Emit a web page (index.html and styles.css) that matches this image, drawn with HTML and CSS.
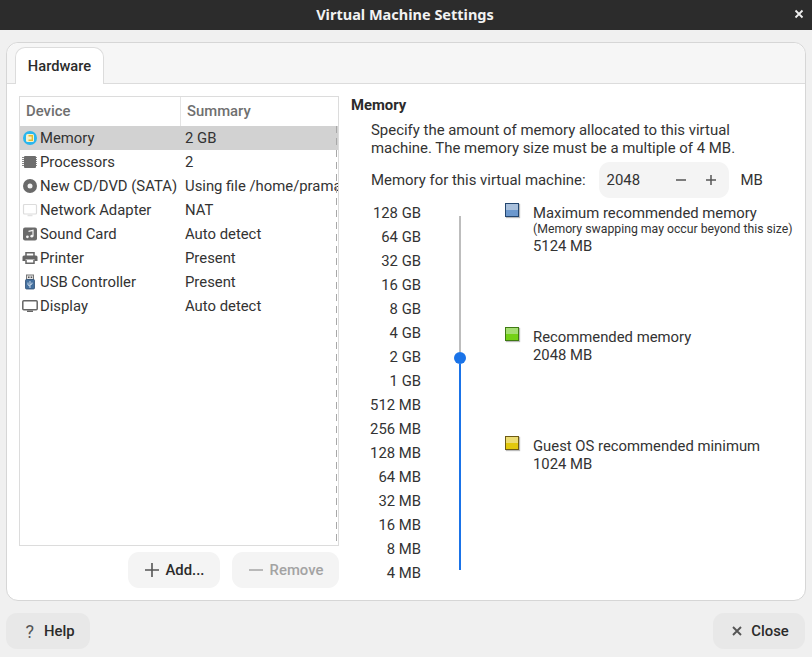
FILE: index.html
```html
<!DOCTYPE html>
<html>
<head>
    <meta charset="UTF-8">
    <title>Virtual Machine Settings</title>
    <link rel="stylesheet" href="styles.css">
</head>
<body>
    <header class="titlebar">
        <span class="title">Virtual Machine Settings</span>
        <svg class="title-close" width="10" height="10" viewBox="0 0 10 10"><path d="M1.500 1.500l7 7M8.500 1.500l-7 7" stroke="#eee" stroke-width="1.800"/></svg>
    </header>

    <div class="frame">
        <div class="tabs">
            <div class="tab">Hardware</div>
        </div>
        <div class="page">
            <section class="devices">
                <div class="tree">
                    <div class="tree-head">
                        <div class="col-device">Device</div>
                        <div class="col-summary">Summary</div>
                    </div>
                    <div class="tree-row selected">
                        <svg class="dev-icon" viewBox="0 0 16 16"><circle cx="8" cy="8" r="7" fill="#29b6ee"/><rect x="4" y="4" width="8" height="8" rx="1.500" fill="#f6f1cc"/><path d="M6.500 5.700h3.800v4.600H6.500" fill="none" stroke="#e2bd2c" stroke-width="1.400"/></svg>
                        <span class="dev-name">Memory</span><span class="dev-sum">2 GB</span>
                    </div>
                    <div class="tree-row">
                        <svg class="dev-icon" viewBox="0 0 16 16"><rect x="2" y="2" width="12" height="12" rx="1" fill="#6e6e6e"/><path d="M0 3.500h2M0 5.500h2M0 7.500h2M0 9.500h2M0 11.500h2M14 3.500h1M14 5.500h1M14 7.500h1M14 9.500h1M14 11.500h1" stroke="#8a8a8a" stroke-width="1"/></svg>
                        <span class="dev-name">Processors</span><span class="dev-sum">2</span>
                    </div>
                    <div class="tree-row">
                        <svg class="dev-icon" viewBox="0 0 16 16"><circle cx="8" cy="8" r="7" fill="#6a6a6a"/><circle cx="8" cy="8" r="2.500" fill="#f2f2f2"/></svg>
                        <span class="dev-name">New CD/DVD (SATA)</span><span class="dev-sum">Using file /home/pramaa</span>
                    </div>
                    <div class="tree-row">
                        <svg class="dev-icon" viewBox="0 0 16 16"><rect x="1.500" y="2.500" width="13" height="9.500" rx="1" fill="#fff" stroke="#dcdcdc" stroke-width="1.200"/><path d="M5.500 13.500h5" stroke="#e2e2e2" stroke-width="1.500"/></svg>
                        <span class="dev-name">Network Adapter</span><span class="dev-sum">NAT</span>
                    </div>
                    <div class="tree-row">
                        <svg class="dev-icon" viewBox="0 0 16 16"><rect x="1" y="1.500" width="14" height="13" rx="2" fill="#6b6b6b"/><path d="M6.500 5.300l4.500-1v5.900" fill="none" stroke="#f2f2f2" stroke-width="1.200"/><circle cx="5.400" cy="10.800" r="1.400" fill="#f2f2f2"/><circle cx="9.800" cy="10.200" r="1.400" fill="#f2f2f2"/></svg>
                        <span class="dev-name">Sound Card</span><span class="dev-sum">Auto detect</span>
                    </div>
                    <div class="tree-row">
                        <svg class="dev-icon" viewBox="0 0 16 16"><path d="M4 6V2.700h8V6" fill="none" stroke="#666" stroke-width="1.500"/><path d="M2 5.500h12a1.500 1.500 0 0 1 1.500 1.500v4h-3V9.500h-9V11H.5V7A1.500 1.500 0 0 1 2 5.500z" fill="#666"/><path d="M4 10v3.300h8V10" fill="none" stroke="#666" stroke-width="1.500"/></svg>
                        <span class="dev-name">Printer</span><span class="dev-sum">Present</span>
                    </div>
                    <div class="tree-row">
                        <svg class="dev-icon" viewBox="0 0 16 16"><rect x="4.500" y="1" width="7" height="5" fill="#e4e4e4" stroke="#777"/><rect x="6" y="2.500" width="1.500" height="1.500" fill="#555"/><rect x="8.700" y="2.500" width="1.500" height="1.500" fill="#555"/><rect x="3.500" y="5.500" width="9" height="9.500" rx="1" fill="#44709f" stroke="#2f4f75" stroke-width="0.800"/><path d="M8 7v7M6 8.500v2.500l2 1M10 8.500v1.500l-2 1" fill="none" stroke="#d7e3f0" stroke-width="0.900"/></svg>
                        <span class="dev-name">USB Controller</span><span class="dev-sum">Present</span>
                    </div>
                    <div class="tree-row">
                        <svg class="dev-icon" viewBox="0 0 16 16"><rect x="0.800" y="2.800" width="14.400" height="9" rx="1" fill="#fff" stroke="#666" stroke-width="1.500"/><rect x="5" y="12.500" width="6" height="1.500" fill="#666"/></svg>
                        <span class="dev-name">Display</span><span class="dev-sum">Auto detect</span>
                    </div>
                    <div class="scroll-mark"></div>
                </div>
                <div class="device-actions">
                    <button class="btn btn-add" type="button">
                        <svg width="14" height="14" viewBox="0 0 14 14"><path d="M7 0v14M0 7h14" stroke="#555" stroke-width="1.600"/></svg>
                        Add...
                    </button>
                    <button class="btn btn-remove" type="button">
                        <svg width="14" height="14" viewBox="0 0 14 14"><path d="M0 7h14" stroke="#aaa" stroke-width="1.600"/></svg>
                        Remove
                    </button>
                </div>
            </section>

            <section class="memory">
                <h2>Memory</h2>
                <p class="intro">Specify the amount of memory allocated to this virtual machine. The memory size must be a multiple of 4 MB.</p>
                <div class="mem-input">
                    <span>Memory for this virtual machine:</span>
                    <div class="spin">
                        <span class="spin-value">2048</span>
                        <svg width="12" height="12" viewBox="0 0 12 12"><path d="M1 6h10" stroke="#555" stroke-width="1.500"/></svg>
                        <svg width="12" height="12" viewBox="0 0 12 12"><path d="M1 6h10M6 1v10" stroke="#555" stroke-width="1.500"/></svg>
                    </div>
                    <span>MB</span>
                </div>
                <div class="scale-area">
                    <div class="scale-labels">
                        <div>128 GB</div><div>64 GB</div><div>32 GB</div><div>16 GB</div>
                        <div>8 GB</div><div>4 GB</div><div>2 GB</div><div>1 GB</div>
                        <div>512 MB</div><div>256 MB</div><div>128 MB</div><div>64 MB</div>
                        <div>32 MB</div><div>16 MB</div><div>8 MB</div><div>4 MB</div>
                    </div>
                    <div class="slider">
                        <div class="track-off"></div>
                        <div class="thumb"></div>
                        <div class="track-on"></div>
                    </div>
                    <div class="legend">
                        <div class="legend-item item-max">
                            <span class="swatch swatch-blue"></span>
                            <div>
                                <div>Maximum recommended memory</div>
                                <div class="small">(Memory swapping may occur beyond this size)</div>
                                <div>5124 MB</div>
                            </div>
                        </div>
                        <div class="legend-item item-rec">
                            <span class="swatch swatch-green"></span>
                            <div>
                                <div>Recommended memory</div>
                                <div>2048 MB</div>
                            </div>
                        </div>
                        <div class="legend-item item-min">
                            <span class="swatch swatch-yellow"></span>
                            <div>
                                <div>Guest OS recommended minimum</div>
                                <div>1024 MB</div>
                            </div>
                        </div>
                    </div>
                </div>
            </section>
        </div>
    </div>

    <footer class="dialog-actions">
        <button class="btn btn-dark btn-help" type="button">
            <span class="help-mark">?</span>
            Help
        </button>
        <button class="btn btn-dark btn-close" type="button">
            <svg width="10" height="10" viewBox="0 0 10 10"><path d="M1 1l8 8M9 1l-8 8" stroke="#555" stroke-width="1.900"/></svg>
            Close
        </button>
    </footer>
</body>
</html>
```

FILE: styles.css
```css
html, body {
    height: 100%;
}
body {
    margin: 0;
    height: 657px;
    overflow: hidden;
    display: flex;
    flex-direction: column;
    background: #f0f0f0;
    font-family: Roboto, sans-serif;
    font-size: 14.85px;
    color: #333;
}
.titlebar {
    height: 30px;
    flex: none;
    position: relative;
    background: #2c2c2c;
    color: #f2f2f2;
    display: flex;
    align-items: center;
    justify-content: center;
}
.title {
    font-family: "Noto Sans", sans-serif;
    font-weight: 700;
    font-size: 14.5px;
    margin-right: 2px;
    padding-bottom: 2px;
}
.title-close {
    position: absolute;
    right: 8px;
    top: 9px;
}
.frame {
    flex: none;
    height: 557px;
    margin: 12px 6px 0;
    background: #fff;
    border: 1px solid #d6d6d6;
    border-radius: 12px;
    display: flex;
    flex-direction: column;
}
.tabs {
    height: 41px;
    flex: none;
    box-sizing: border-box;
    background: #f6f6f6;
    border-bottom: 1px solid #dcdcdc;
    border-radius: 12px 12px 0 0;
    padding: 4px 0 0 8px;
    display: flex;
}
.tab {
    width: 89px;
    height: 37px;
    box-sizing: border-box;
    background: #fff;
    border: 1px solid #dcdcdc;
    border-bottom: none;
    border-radius: 10px 10px 0 0;
    display: flex;
    align-items: center;
    justify-content: center;
    font-weight: 500;
    font-size: 14.67px;
    color: #2b2b2b;
}
.page {
    flex: 1;
    display: flex;
    padding: 12px 0 0 12px;
    min-height: 0;
}
.devices {
    width: 320px;
    flex: none;
    display: flex;
    flex-direction: column;
}
.tree {
    position: relative;
    width: 320px;
    height: 450px;
    box-sizing: border-box;
    border: 1px solid #dcdcdc;
    overflow: hidden;
}
.tree-head {
    height: 29px;
    display: flex;
    color: #6f6f6f;
    font-weight: 500;
    line-height: 28px;
}
.col-device {
    width: 161px;
    padding-left: 6px;
    box-sizing: border-box;
    border-right: 1px solid #e4e4e4;
}
.col-summary {
    padding-left: 6px;
}
.tree-row {
    height: 24px;
    display: flex;
    align-items: center;
    white-space: nowrap;
    padding-left: 2px;
}
.tree-row.selected {
    background: #d2d2d2;
}
.dev-icon {
    width: 16px;
    height: 16px;
    flex: none;
    margin-right: 2px;
}
.dev-name {
    width: 145px;
    flex: none;
}
.scroll-mark {
    position: absolute;
    top: 29px;
    bottom: 0;
    right: 1px;
    width: 1px;
    background: repeating-linear-gradient(to bottom, #a8a8a8 0 7px, transparent 7px 12px);
}
.device-actions {
    margin-top: 6px;
    display: flex;
    justify-content: flex-end;
    gap: 12px;
}
.btn {
    height: 36px;
    border: none;
    border-radius: 11px;
    background: #f4f4f4;
    font: 500 14.85px Roboto, sans-serif;
    color: #2b2b2b;
    display: flex;
    align-items: center;
    justify-content: center;
    gap: 7px;
    padding: 0;
}
.btn-add {
    width: 92px;
    padding-left: 1px;
}
.btn-remove {
    width: 107px;
    padding-left: 1px;
    color: #a3a3a3;
}
.memory {
    margin-left: 12px;
    flex: 1;
    min-width: 0;
}
.memory h2 {
    margin: 0;
    font-size: 14.85px;
    font-weight: 700;
    line-height: 18px;
    color: #2b2b2b;
}
.intro {
    margin: 7px 0 0 20px;
    width: 385px;
    font-size: 14.93px;
    line-height: 18px;
}
.mem-input {
    margin: 5px 0 0 20px;
    height: 36px;
    font-size: 14.93px;
    display: flex;
    align-items: center;
}
.spin {
    width: 130px;
    height: 36px;
    margin: 0 12px 0 13px;
    box-sizing: border-box;
    padding: 0 12px 0 8px;
    background: #f4f4f4;
    border-radius: 11px;
    display: flex;
    align-items: center;
    gap: 18px;
}
.spin-value {
    flex: 1;
}
.scale-area {
    margin-top: 3px;
    display: flex;
}
.scale-labels {
    width: 70px;
    text-align: right;
    line-height: 24px;
}
.slider {
    width: 12px;
    margin: 15px 0 0 33px;
    height: 354px;
    display: flex;
    flex-direction: column;
    align-items: center;
}
.track-off {
    width: 2px;
    height: 136px;
    background: #bdbdbd;
}
.thumb {
    width: 12px;
    height: 12px;
    flex: none;
    border-radius: 50%;
    background: #1a73e8;
}
.track-on {
    width: 2px;
    flex: 1;
    background: #1a73e8;
}
.legend {
    margin-left: 39px;
    flex: 1;
    line-height: 18px;
}
.legend-item {
    display: flex;
    gap: 14px;
}
.item-max {
    margin-top: 3px;
}
.item-rec {
    margin-top: 73px;
}
.item-min {
    margin-top: 73px;
}
.small {
    font-size: 12.25px;
    line-height: 15px;
    white-space: nowrap;
}
.swatch {
    width: 14px;
    height: 14px;
    box-sizing: border-box;
    flex: none;
    box-shadow: 1px 1px 1px #bbb;
    margin-top: -1px;
}
.swatch-blue {
    border: 1px solid #23466f;
    background: linear-gradient(to bottom, #a9c0dc 50%, #6c98cd 50%);
}
.swatch-green {
    border: 1px solid #3f7a12;
    background: linear-gradient(to bottom, #a4de72 50%, #73d116 50%);
}
.swatch-yellow {
    border: 1px solid #6d5a14;
    background: linear-gradient(to bottom, #ecdc72 50%, #e2c80c 50%);
}
.dialog-actions {
    flex: none;
    margin-top: 12px;
    padding: 0 7px 0 6px;
    display: flex;
    justify-content: space-between;
}
.btn-dark {
    background: #e8e8e8;
}
.btn-help {
    width: 84px;
    padding-left: 4px;
    gap: 10px;
}
.help-mark {
    font-size: 18px;
    font-weight: 400;
    color: #555;
}
.btn-close {
    width: 92px;
    padding-left: 3px;
    gap: 9px;
}
```
